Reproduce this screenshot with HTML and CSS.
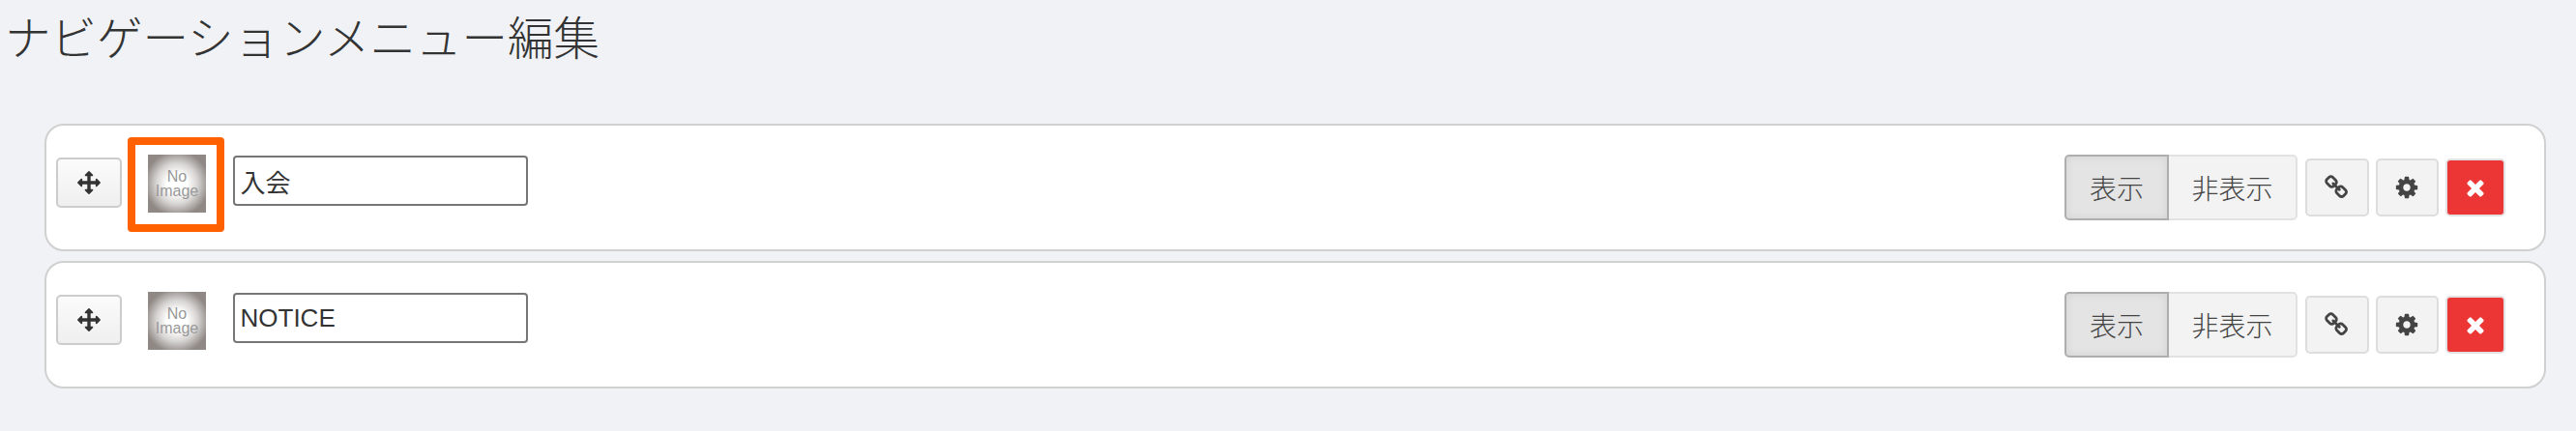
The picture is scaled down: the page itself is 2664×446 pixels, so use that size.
FILE: index.html
```html
<!DOCTYPE html>
<html lang="ja">
<head>
    <meta charset="UTF-8">
    <meta name="viewport" content="width=device-width, initial-scale=1.0">
    <title>ナビゲーションメニュー編集</title>
    <link rel="stylesheet" href="styles.css">
</head>
<body>
    <h1 class="page-title">ナビゲーションメニュー編集</h1>

    <div class="menu-list">
        <div class="menu-item">
            <div class="item-left">
                <button class="btn btn-move" type="button">
                    <svg class="icon icon-move" viewBox="0 0 1792 1792"><path d="M1792 896q0 26-19 45l-256 256q-19 19-45 19t-45-19-19-45v-128h-384v384h128q26 0 45 19t19 45-19 45l-256 256q-19 19-45 19t-45-19l-256-256q-19-19-19-45t19-45 45-19h128v-384h-384v128q0 26-19 45t-45 19-45-19l-256-256q-19-19-19-45t19-45l256-256q19-19 45-19t45 19 19 45v128h384v-384h-128q-26 0-45-19t-19-45 19-45l256-256q19-19 45-19t45 19l256 256q19 19 19 45t-19 45-45 19h-128v384h384v-128q0-26 19-45t45-19 45 19l256 256q19 19 19 45z"/></svg>
                </button>
                <div class="thumb">
                    <span>No<br>Image</span>
                    <div class="highlight"></div>
                </div>
                <input class="name-input" type="text" value="入会">
            </div>
            <div class="item-right">
                <div class="toggle">
                    <button class="toggle-btn active" type="button">表示</button>
                    <button class="toggle-btn" type="button">非表示</button>
                </div>
                <button class="btn btn-tool" type="button">
                    <svg class="icon" viewBox="0 0 1792 1792"><path d="M1456 1216q0-40-28-68l-208-208q-28-28-68-28-42 0-72 32 3 3 19 18.5t21.5 21.5 15 19 13 25.5 3.5 27.5q0 40-28 68t-68 28q-15 0-27.5-3.5t-25.5-13-19-15-21.5-21.5-18.5-19q-33 31-33 73 0 40 28 68l206 207q27 27 68 27 40 0 68-26l147-146q28-28 28-67zm-703-705q0-40-28-68l-206-207q-28-28-68-28-39 0-68 27l-147 146q-28 28-28 67 0 40 28 68l208 208q27 27 68 27 42 0 72-31-3-3-19-18.5t-21.5-21.5-15-19-13-25.5-3.5-27.5q0-40 28-68t68-28q15 0 27.5 3.5t25.5 13 19 15 21.5 21.5 18.5 19q33-31 33-73zm895 705q0 120-85 203l-147 146q-83 83-203 83-121 0-204-85l-206-207q-83-83-83-203 0-123 88-209l-88-88q-86 88-208 88-120 0-204-84l-208-208q-84-84-84-204t85-203l147-146q83-83 203-83 121 0 204 85l206 207q83 83 83 203 0 123-88 209l88 88q86-88 208-88 120 0 204 84l208 208q84 84 84 204z"/></svg>
                </button>
                <button class="btn btn-tool" type="button">
                    <svg class="icon" viewBox="0 0 1792 1792"><path d="M1152 896q0-106-75-181t-181-75-181 75-75 181 75 181 181 75 181-75 75-181zm512-109v222q0 12-8 23t-20 13l-185 28q-19 54-39 91 35 50 107 138 10 12 10 25t-9 23q-27 37-99 108t-94 71q-12 0-26-9l-138-108q-44 23-91 38-16 136-29 186-7 28-36 28h-222q-14 0-24.5-8.5t-11.5-21.5l-28-184q-49-16-90-37l-141 107q-10 9-25 9-14 0-25-11-126-114-165-168-7-10-7-23 0-12 8-23 15-21 51-66.5t54-70.5q-27-50-41-99l-183-27q-13-2-21-12.5t-8-23.5v-222q0-12 8-23t19-13l186-28q14-46 39-92-40-57-107-138-10-12-10-24 0-10 9-23 26-36 98.5-107.5t94.5-71.5q13 0 26 10l138 107q44-23 91-38 16-136 29-186 7-28 36-28h222q14 0 24.5 8.5t11.5 21.5l28 184q49 16 90 37l142-107q9-9 24-9 13 0 25 10 129 119 165 170 7 8 7 22 0 12-8 23-15 21-51 66.5t-54 70.5q26 50 41 98l183 28q13 2 21 12.5t8 23.5z"/></svg>
                </button>
                <button class="btn btn-delete" type="button">
                    <svg class="icon" viewBox="0 0 1792 1792"><path d="M1490 1322q0 40-28 68l-136 136q-28 28-68 28t-68-28l-294-294-294 294q-28 28-68 28t-68-28l-136-136q-28-28-28-68t28-68l294-294-294-294q-28-28-28-68t28-68l136-136q28-28 68-28t68 28l294 294 294-294q28-28 68-28t68 28l136 136q28 28 28 68t-28 68l-294 294 294 294q28 28 28 68z"/></svg>
                </button>
            </div>
        </div>

        <div class="menu-item">
            <div class="item-left">
                <button class="btn btn-move" type="button">
                    <svg class="icon icon-move" viewBox="0 0 1792 1792"><path d="M1792 896q0 26-19 45l-256 256q-19 19-45 19t-45-19-19-45v-128h-384v384h128q26 0 45 19t19 45-19 45l-256 256q-19 19-45 19t-45-19l-256-256q-19-19-19-45t19-45 45-19h128v-384h-384v128q0 26-19 45t-45 19-45-19l-256-256q-19-19-19-45t19-45l256-256q19-19 45-19t45 19 19 45v128h384v-384h-128q-26 0-45-19t-19-45 19-45l256-256q19-19 45-19t45 19l256 256q19 19 19 45t-19 45-45 19h-128v384h384v-128q0-26 19-45t45-19 45 19l256 256q19 19 19 45z"/></svg>
                </button>
                <div class="thumb">
                    <span>No<br>Image</span>
                </div>
                <input class="name-input" type="text" value="NOTICE">
            </div>
            <div class="item-right">
                <div class="toggle">
                    <button class="toggle-btn active" type="button">表示</button>
                    <button class="toggle-btn" type="button">非表示</button>
                </div>
                <button class="btn btn-tool" type="button">
                    <svg class="icon" viewBox="0 0 1792 1792"><path d="M1456 1216q0-40-28-68l-208-208q-28-28-68-28-42 0-72 32 3 3 19 18.5t21.5 21.5 15 19 13 25.5 3.5 27.5q0 40-28 68t-68 28q-15 0-27.5-3.5t-25.5-13-19-15-21.5-21.5-18.5-19q-33 31-33 73 0 40 28 68l206 207q27 27 68 27 40 0 68-26l147-146q28-28 28-67zm-703-705q0-40-28-68l-206-207q-28-28-68-28-39 0-68 27l-147 146q-28 28-28 67 0 40 28 68l208 208q27 27 68 27 42 0 72-31-3-3-19-18.5t-21.5-21.5-15-19-13-25.5-3.5-27.5q0-40 28-68t68-28q15 0 27.5 3.5t25.5 13 19 15 21.5 21.5 18.5 19q33-31 33-73zm895 705q0 120-85 203l-147 146q-83 83-203 83-121 0-204-85l-206-207q-83-83-83-203 0-123 88-209l-88-88q-86 88-208 88-120 0-204-84l-208-208q-84-84-84-204t85-203l147-146q83-83 203-83 121 0 204 85l206 207q83 83 83 203 0 123-88 209l88 88q86-88 208-88 120 0 204 84l208 208q84 84 84 204z"/></svg>
                </button>
                <button class="btn btn-tool" type="button">
                    <svg class="icon" viewBox="0 0 1792 1792"><path d="M1152 896q0-106-75-181t-181-75-181 75-75 181 75 181 181 75 181-75 75-181zm512-109v222q0 12-8 23t-20 13l-185 28q-19 54-39 91 35 50 107 138 10 12 10 25t-9 23q-27 37-99 108t-94 71q-12 0-26-9l-138-108q-44 23-91 38-16 136-29 186-7 28-36 28h-222q-14 0-24.5-8.5t-11.5-21.5l-28-184q-49-16-90-37l-141 107q-10 9-25 9-14 0-25-11-126-114-165-168-7-10-7-23 0-12 8-23 15-21 51-66.5t54-70.5q-27-50-41-99l-183-27q-13-2-21-12.5t-8-23.5v-222q0-12 8-23t19-13l186-28q14-46 39-92-40-57-107-138-10-12-10-24 0-10 9-23 26-36 98.5-107.5t94.5-71.5q13 0 26 10l138 107q44-23 91-38 16-136 29-186 7-28 36-28h222q14 0 24.5 8.5t11.5 21.5l28 184q49 16 90 37l142-107q9-9 24-9 13 0 25 10 129 119 165 170 7 8 7 22 0 12-8 23-15 21-51 66.5t-54 70.5q26 50 41 98l183 28q13 2 21 12.5t8 23.5z"/></svg>
                </button>
                <button class="btn btn-delete" type="button">
                    <svg class="icon" viewBox="0 0 1792 1792"><path d="M1490 1322q0 40-28 68l-136 136q-28 28-68 28t-68-28l-294-294-294 294q-28 28-68 28t-68-28l-136-136q-28-28-28-68t28-68l294-294-294-294q-28-28-28-68t28-68l136-136q28-28 68-28t68 28l294 294 294-294q28-28 68-28t68 28l136 136q28 28 28 68t-28 68l-294 294 294 294q28 28 28 68z"/></svg>
                </button>
            </div>
        </div>
    </div>
</body>
</html>
```

FILE: styles.css
```css
body {
    margin: 0;
    background-color: #f0f2f6;
    color: #333;
    font-family: "Liberation Sans", "Noto Sans CJK JP", sans-serif;
}

.page-title {
    margin: 0;
    padding: 10px 0 0 5px;
    height: 120px;
    box-sizing: border-box;
    font-size: 47.5px;
    line-height: 62px;
    font-weight: 300;
    color: #333;
}

.menu-list {
    display: flex;
    flex-direction: column;
    gap: 10.5px;
    margin: 8px 31px 0 46px;
}

.menu-item {
    display: flex;
    justify-content: space-between;
    align-items: flex-start;
    height: 131.5px;
    box-sizing: border-box;
    padding: 30px 40px 0 10px;
    background: white;
    border: 2px solid #d0d0d0;
    border-radius: 20px;
}

.item-left {
    display: flex;
    align-items: flex-start;
}

.item-right {
    display: flex;
    align-items: flex-start;
    gap: 7px;
}

.btn {
    display: flex;
    align-items: center;
    justify-content: center;
    padding: 0;
    box-sizing: border-box;
    border: 2px solid #ddd;
    border-radius: 5px;
    background-color: #f3f3f3;
    cursor: pointer;
}

.icon {
    width: 26px;
    height: 26px;
    fill: #444;
}

.btn-move {
    width: 68px;
    height: 52px;
    margin-top: 3px;
    border-color: #ccc;
    background: linear-gradient(#fbfbfb, #efefef);
}

.icon-move {
    width: 24px;
    height: 24px;
    fill: #333;
}

.thumb {
    position: relative;
    width: 60px;
    height: 60px;
    margin-left: 27px;
    padding-top: 15px;
    box-sizing: border-box;
    background: radial-gradient(ellipse closest-side, #fff 35%, #d8d6d4 70%, #8f8884 112%);
    color: #999;
    font-size: 16px;
    line-height: 15px;
    text-align: center;
}

.highlight {
    position: absolute;
    left: -21px;
    top: -18px;
    width: 100px;
    height: 98px;
    box-sizing: border-box;
    border: 8px solid #ff6000;
    border-radius: 4px;
}

.name-input {
    width: 305.5px;
    height: 52px;
    margin: 1px 0 0 27.5px;
    padding: 0 6px;
    box-sizing: border-box;
    border: 2px solid #767676;
    border-radius: 4px;
    background: white;
    color: #333;
    font-family: "Liberation Sans", "Noto Sans CJK JP", sans-serif;
    font-size: 26px;
}

.toggle {
    display: flex;
    height: 68px;
    margin-right: 1px;
}

.toggle-btn {
    padding: 0;
    box-sizing: border-box;
    width: 133px;
    border: 2px solid #e2e2e2;
    border-left: none;
    border-radius: 0 5px 5px 0;
    background-color: #f3f3f3;
    color: #444;
    font-family: "Liberation Sans", "Noto Sans CJK JP", sans-serif;
    font-size: 28px;
    font-weight: 300;
    cursor: pointer;
}

.toggle-btn.active {
    width: 108px;
    border: 2px solid #aeaeae;
    border-radius: 5px 0 0 5px;
    background-color: #e4e4e4;
    box-shadow: inset 0 0 10px rgba(0, 0, 0, 0.08);
    color: #444;
}

.btn-tool,
.btn-delete {
    width: 65.5px;
    height: 60px;
    margin-top: 4px;
}

.btn-delete {
    width: 62px;
    background-color: #ec3535;
    border-color: #e2e2e2;
}

.btn-delete .icon {
    fill: white;
}
```
